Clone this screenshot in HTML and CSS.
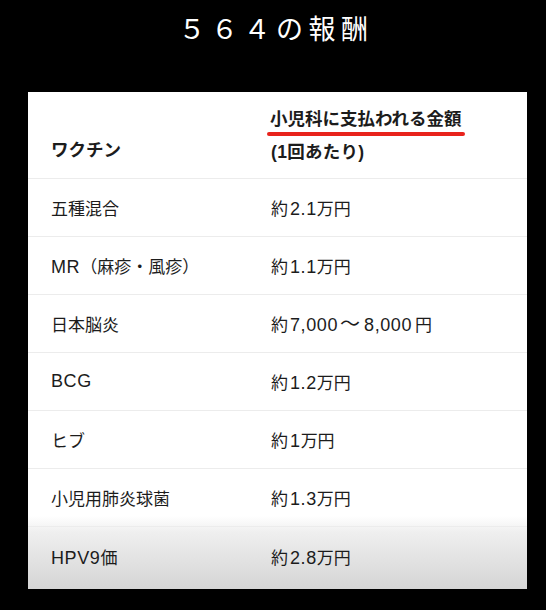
FILE: index.html
```html
<!DOCTYPE html>
<html lang="ja">
<head>
<meta charset="utf-8">
<link rel="stylesheet" href="styles.css">
</head>
<body>
<h1 class="title">５６４の報酬</h1>
<div class="card">
  <div class="row head">
    <div class="col-a">ワクチン</div>
    <div class="col-b">
      <span class="mark">小児科に支払われる金額</span>
      <span class="sub">(1回あたり)</span>
    </div>
  </div>
  <div class="row"><div class="col-a">五種混合</div><div class="col-b">約<span class="n">2.1</span>万円</div></div>
  <div class="row"><div class="col-a"><span class="n">MR</span>（麻疹・風疹）</div><div class="col-b">約<span class="n">1.1</span>万円</div></div>
  <div class="row"><div class="col-a">日本脳炎</div><div class="col-b">約<span class="n">7,000</span><span class="t">～</span><span class="n">8,000</span><span class="y">円</span></div></div>
  <div class="row"><div class="col-a"><span class="n">BCG</span></div><div class="col-b">約<span class="n">1.2</span>万円</div></div>
  <div class="row"><div class="col-a">ヒブ</div><div class="col-b">約<span class="n">1</span>万円</div></div>
  <div class="row"><div class="col-a">小児用肺炎球菌</div><div class="col-b">約<span class="n">1.3</span>万円</div></div>
  <div class="row last"><div class="col-a"><span class="n">HPV9</span>価</div><div class="col-b">約<span class="n">2.8</span>万円</div></div>
</div>
</body>
</html>
```
FILE: styles.css
```css
html, body {
  margin: 0;
  padding: 0;
  background: #000;
}
body {
  width: 546px;
  height: 610px;
  overflow: hidden;
  font-family: "Liberation Sans", "Noto Sans CJK JP", sans-serif;
}
.title {
  margin: 0;
  padding: 9px 0 0 6px;
  height: 37px;
  line-height: 37px;
  text-align: center;
  color: #fff;
  font-family: "Noto Sans CJK JP", sans-serif;
  font-weight: 400;
  font-size: 27px;
  letter-spacing: 5.5px;
}
.card {
  margin: 46px 0 0 28px;
  width: 499px;
  height: 497px;
  background: linear-gradient(to bottom, #fff 0, #fff 424px, #efefef 440px, #d5d5d5 100%);
  color: #1c1c1c;
  display: flex;
  flex-direction: column;
}
.row {
  display: flex;
  align-items: center;
  height: 57px;
  padding-left: 23px;
  border-bottom: 1px solid #ececec;
  font-size: 17px;
}
.col-a {
  width: 220px;
  flex: none;
}
.col-b {
  flex: 1;
}
.n {
  font-size: 18px;
  letter-spacing: 0.6px;
}
.col-b .n {
  margin-left: 2px;
}
.t {
  display: inline-block;
  width: 22px;
  text-align: center;
  margin: 0 1px;
  font-size: 20px;
  line-height: 17px;
}
.y {
  margin-left: 3px;
}
.head {
  height: 86px;
  align-items: flex-end;
  font-weight: 700;
  font-size: 17.5px;
}
.head .col-a {
  line-height: 30px;
  padding-bottom: 13px;
}
.head .col-b {
  display: flex;
  flex-direction: column;
  align-items: flex-start;
  padding-bottom: 11px;
}
.mark {
  position: relative;
  line-height: 26px;
  padding-bottom: 4px;
  margin-left: -1px;
}
.mark::after {
  content: "";
  position: absolute;
  left: -3px;
  right: -3px;
  bottom: 0;
  height: 4px;
  border-radius: 2px;
  background: #e8231c;
}
.sub {
  line-height: 30px;
  margin-top: 1px;
  letter-spacing: 0.3px;
}
.last {
  flex: 1;
  height: auto;
  border-bottom: none;
  padding-bottom: 4px;
}
```
